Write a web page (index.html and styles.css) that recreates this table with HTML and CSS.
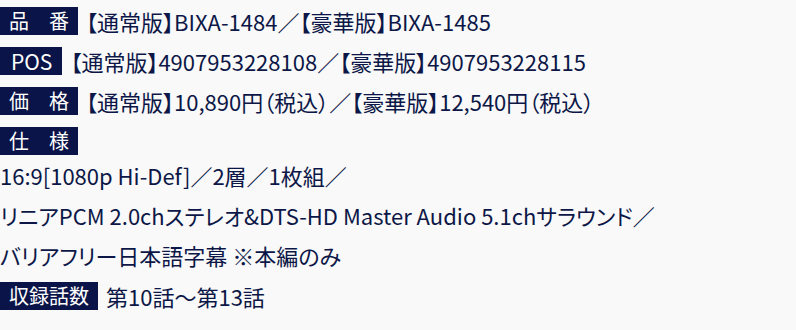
FILE: index.html
```html
<!DOCTYPE html>
<html lang="ja">
<head>
<meta charset="utf-8">
<link rel="stylesheet" href="styles.css">
</head>
<body>
<dl class="spec">
  <div class="row">
    <dt class="label">品　番</dt>
    <dd class="value">【通常版】BIXA-1484／【豪華版】BIXA-1485</dd>
  </div>
  <div class="row">
    <dt class="label label-latin">POS</dt>
    <dd class="value">【通常版】4907953228108／【豪華版】4907953228115</dd>
  </div>
  <div class="row">
    <dt class="label">価　格</dt>
    <dd class="value">【通常版】10,890円（税込）／【豪華版】12,540円（税込）</dd>
  </div>
  <div class="row">
    <dt class="label">仕　様</dt>
  </div>
  <div class="block">
    <p class="line">16:9[1080p Hi-Def]／2層／1枚組／</p>
    <p class="line">リニアPCM 2.0chステレオ&amp;DTS-HD Master Audio 5.1chサラウンド／</p>
    <p class="line">バリアフリー日本語字幕 ※本編のみ</p>
  </div>
  <div class="row last">
    <dt class="label">収録話数</dt>
    <dd class="value">第10話～第13話</dd>
  </div>
</dl>
</body>
</html>
```
FILE: styles.css
```css
html, body {
  margin: 0;
  padding: 0;
  background: #f9f9f9;
}
body {
  font-family: "Noto Sans CJK JP", "Noto Sans", sans-serif;
  color: #0c1747;
}
.spec {
  margin: 0;
  padding: 7px 0 0;
}
.row {
  display: flex;
  align-items: center;
  height: 28px;
  margin-bottom: 12px;
}
.label {
  height: 28px;
  line-height: 28px;
  padding: 0 9px;
  background: #0a1448;
  color: #ffffff;
  font-size: 20px;
  white-space: nowrap;
}
.label-latin {
  font-size: 21px;
  padding: 0 10px 0 11px;
}
.value {
  margin: 0 0 0 8px;
  font-size: 22px;
  white-space: nowrap;
  font-feature-settings: "palt";
}
.block {
  margin-top: -12px;
}
.line {
  margin: 0;
  font-size: 22px;
  line-height: 40px;
  white-space: nowrap;
  font-feature-settings: "palt";
}
.last {
  margin-top: 7px;
}
```
